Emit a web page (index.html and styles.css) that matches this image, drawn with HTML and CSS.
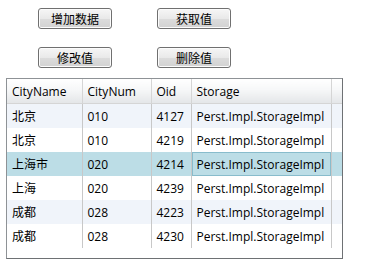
FILE: index.html
```html
<!DOCTYPE html>
<html>
    <head>
        <meta charset="UTF-8">
        <title>Perst Demo</title>
        <link rel="stylesheet" href="styles.css">
    </head>
    <body>
        <div class="actions">
            <button>增加数据</button>
            <button>获取值</button>
        </div>
        <div class="actions">
            <button>修改值</button>
            <button>删除值</button>
        </div>

        <div class="grid">
            <table>
                <colgroup>
                    <col class="c-name">
                    <col class="c-num">
                    <col class="c-oid">
                    <col class="c-storage">
                    <col>
                </colgroup>
                <thead>
                    <tr>
                        <th>CityName</th>
                        <th>CityNum</th>
                        <th>Oid</th>
                        <th>Storage</th>
                        <th class="filler"></th>
                    </tr>
                </thead>
                <tbody>
                    <tr class="alt">
                        <td>北京</td><td>010</td><td>4127</td><td>Perst.Impl.StorageImpl</td><td class="filler"></td>
                    </tr>
                    <tr>
                        <td>北京</td><td>010</td><td>4219</td><td>Perst.Impl.StorageImpl</td><td class="filler"></td>
                    </tr>
                    <tr class="selected">
                        <td>上海市</td><td>020</td><td>4214</td><td class="current">Perst.Impl.StorageImpl</td><td class="filler"></td>
                    </tr>
                    <tr>
                        <td>上海</td><td>020</td><td>4239</td><td>Perst.Impl.StorageImpl</td><td class="filler"></td>
                    </tr>
                    <tr class="alt">
                        <td>成都</td><td>028</td><td>4223</td><td>Perst.Impl.StorageImpl</td><td class="filler"></td>
                    </tr>
                    <tr>
                        <td>成都</td><td>028</td><td>4230</td><td>Perst.Impl.StorageImpl</td><td class="filler"></td>
                    </tr>
                </tbody>
            </table>
        </div>
    </body>
</html>
```

FILE: styles.css
```css
body{
    margin: 0;
    background-color: #fff;
    font-family: "Open Sans", "Noto Sans CJK SC", sans-serif;
    font-size: 12px;
    color: #000;
}
.actions{
    display: flex;
    gap: 45px;
    padding-left: 38px;
    padding-top: 8px;
    margin-bottom: 10px;
}
button{
    width: 74px;
    height: 21px;
    padding: 0;
    font-family: "Noto Sans CJK SC", sans-serif;
    font-size: 12px;
    color: #000;
    border: 1px solid #707070;
    border-radius: 3px;
    background: linear-gradient(#f6f6f6, #e9e9e9 50%, #dcdcdc 51%, #d2d2d2);
    box-shadow: inset 0 0 0 1px #fcfcfc;
}
.grid{
    margin: 0 0 0 6px;
    width: 335px;
    height: 179px;
    border: 1px solid #8e9296;
    border-right-color: #6e7174;
    border-bottom-color: #6e7174;
    background-color: #fff;
}
table{
    border-collapse: collapse;
    table-layout: fixed;
    width: 100%;
}
.c-name{ width: 75px; }
.c-num{ width: 69px; }
.c-oid{ width: 40px; }
.c-storage{ width: 140px; }
th{
    height: 24px;
    padding: 0 5px;
    text-align: left;
    font-weight: normal;
    background: linear-gradient(#ffffff, #f6f7f8 45%, #e4e6e8);
    border-right: 1px solid #d5d5d5;
    border-bottom: 1px solid #d5d5d5;
    white-space: nowrap;
}
td{
    height: 24px;
    padding: 0 5px;
    border-right: 1px solid #c8c8c8;
    white-space: nowrap;
    overflow: hidden;
}
td.filler, th.filler{
    border-right: none;
}
tr.alt td{
    background-color: #f0f4fa;
}
tr.selected td{
    background-color: #bcdde6;
}
td.current{
    box-shadow: inset 0 0 0 1px #88bccc;
}
```
